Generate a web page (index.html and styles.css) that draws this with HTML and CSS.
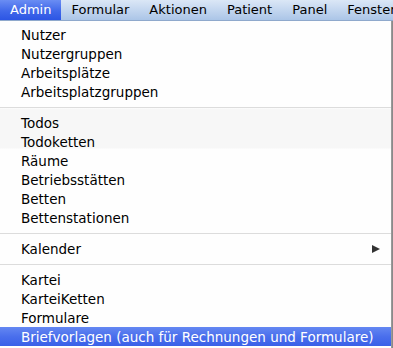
FILE: index.html
```html
<!DOCTYPE html>
<html lang="de">
<head>
    <meta charset="UTF-8">
    <meta name="viewport" content="width=device-width, initial-scale=1.0">
    <title>Admin Menü</title>
    <link rel="stylesheet" href="styles.css">
</head>
<body>

    <div class="menubar">
        <span class="menu-title active">Admin</span>
        <span class="menu-title">Formular</span>
        <span class="menu-title">Aktionen</span>
        <span class="menu-title">Patient</span>
        <span class="menu-title">Panel</span>
        <span class="menu-title">Fenster</span>
    </div>

    <ul class="menu">
        <li class="item">Nutzer</li>
        <li class="item">Nutzergruppen</li>
        <li class="item">Arbeitsplätze</li>
        <li class="item">Arbeitsplatzgruppen</li>
        <li class="sep"></li>
        <li class="item">Todos</li>
        <li class="item">Todoketten</li>
        <li class="item">Räume</li>
        <li class="item">Betriebsstätten</li>
        <li class="item">Betten</li>
        <li class="item">Bettenstationen</li>
        <li class="sep"></li>
        <li class="item has-sub">Kalender <span class="arrow"></span></li>
        <li class="sep"></li>
        <li class="item">Kartei</li>
        <li class="item">KarteiKetten</li>
        <li class="item">Formulare</li>
        <li class="item selected">Briefvorlagen (auch für Rechnungen und Formulare)</li>
    </ul>

</body>
</html>
```

FILE: styles.css
```css
body {
    margin: 0;
    width: 393px;
    height: 348px;
    overflow: hidden;
    background-color: #8a8a8a;
    font-family: "DejaVu Sans", "Noto Sans", sans-serif;
}

.menubar {
    display: flex;
    height: 20px;
    border-bottom: 1px solid #8fa9cc;
    background: linear-gradient(to bottom, #dbe7f6 0%, #c3d6ef 50%, #abc5e7 100%);
    white-space: nowrap;
    overflow: hidden;
}
.menu-title {
    padding: 0 10px;
    font-size: 13px;
    line-height: 20px;
    color: #000;
}
.menu-title.active {
    color: #fff;
    background: linear-gradient(to bottom, #6a8df3 0%, #4068ea 55%, #2c55e4 100%);
}

.menu {
    list-style: none;
    margin: 0;
    padding: 4px 0 0 0;
    width: 392px;
    height: 327px;
    box-sizing: border-box;
    border-right: 1px solid #9a9a9a;
    background: linear-gradient(to bottom,
        #fefefe 0px, #fefefe 87px,
        #f7f7f7 88px, #f7f7f7 127px,
        #fefefe 128px);
    font-size: 13.5px;
}
.item {
    display: flex;
    align-items: center;
    height: 19px;
    padding: 0 21px;
    color: #000;
    white-space: nowrap;
}
.item.selected {
    color: #fff;
    background: linear-gradient(to bottom, #6487f2 0%, #4a6fec 50%, #3a60e8 100%);
}
.has-sub {
    justify-content: space-between;
    padding-right: 11px;
}
.arrow {
    width: 0;
    height: 0;
    border-top: 4.5px solid transparent;
    border-bottom: 4.5px solid transparent;
    border-left: 8px solid #333;
}
.sep {
    height: 1px;
    margin: 6px 0 5px 0;
    background-color: #dcdcdc;
}
```
